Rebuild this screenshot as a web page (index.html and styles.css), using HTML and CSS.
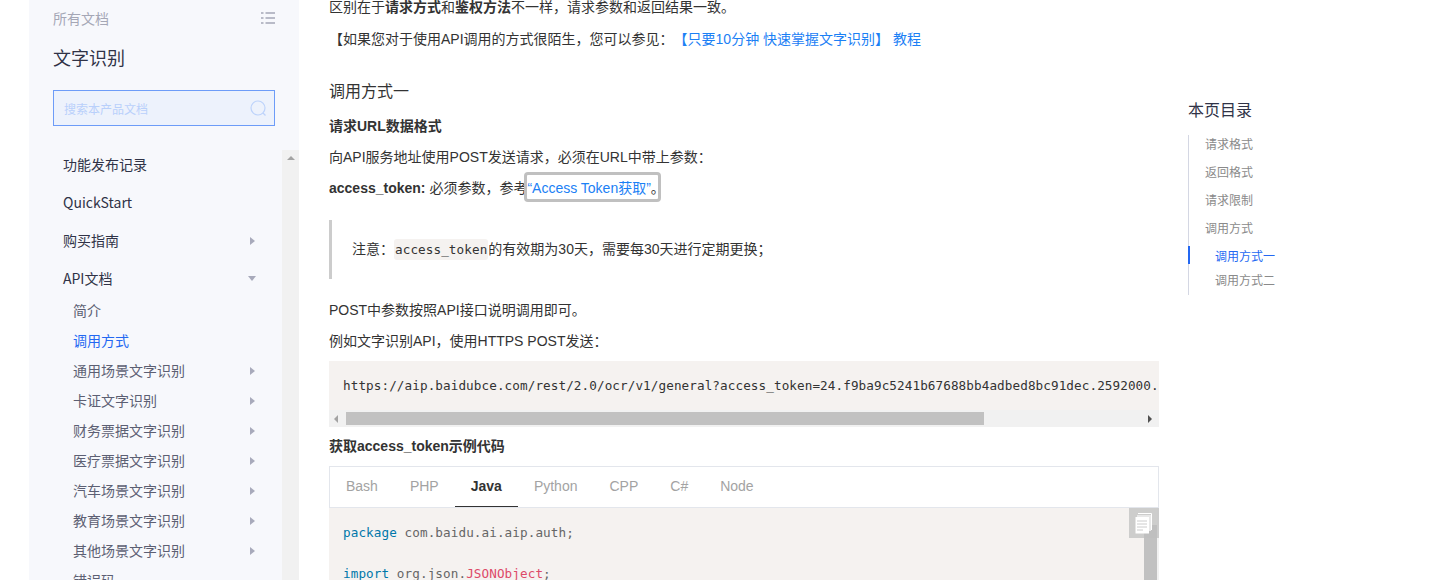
FILE: index.html
```html
<!DOCTYPE html>
<html lang="zh-CN">
<head>
<meta charset="utf-8">
<title>调用方式 - 文字识别</title>
<link rel="stylesheet" href="styles.css">
</head>
<body>
<div class="page">
  <aside class="sidebar">
    <div class="side-head">
      <div class="all-docs">
        <span>所有文档</span>
        <svg class="list-icon" width="14" height="12" viewBox="0 0 14 12"><path d="M0 1h2.500M4.500 1H14M0 6h2.500M4.500 6H14M0 11h2.500M4.500 11H14" stroke="#a5a7b6" stroke-width="1.500" fill="none"/></svg>
      </div>
      <h1 class="product">文字识别</h1>
      <div class="search">
        <span>搜索本产品文档</span>
        <svg width="17" height="17" viewBox="0 0 17 17"><circle cx="8" cy="8" r="7" fill="none" stroke="#bdd3fb" stroke-width="1.200"/><path d="M13 13l2.500 2.500" stroke="#bdd3fb" stroke-width="1.200"/></svg>
      </div>
    </div>
    <div class="menu-wrap">
      <ul class="menu">
        <li class="m1">功能发布记录</li>
        <li class="m1">QuickStart</li>
        <li class="m1">购买指南<i class="tri-r"></i></li>
        <li class="m1 open">API文档<i class="tri-d"></i></li>
        <li class="m2">简介</li>
        <li class="m2 on">调用方式</li>
        <li class="m2">通用场景文字识别<i class="tri-r"></i></li>
        <li class="m2">卡证文字识别<i class="tri-r"></i></li>
        <li class="m2">财务票据文字识别<i class="tri-r"></i></li>
        <li class="m2">医疗票据文字识别<i class="tri-r"></i></li>
        <li class="m2">汽车场景文字识别<i class="tri-r"></i></li>
        <li class="m2">教育场景文字识别<i class="tri-r"></i></li>
        <li class="m2">其他场景文字识别<i class="tri-r"></i></li>
        <li class="m2">错误码</li>
      </ul>
      <div class="side-scroll"><i class="tri-u"></i></div>
    </div>
  </aside>

  <main class="content">
    <p class="intro">区别在于<b>请求方式</b>和<b>鉴权方法</b>不一样，请求参数和返回结果一致。</p>
    <p class="guide">【如果您对于使用API调用的方式很陌生，您可以参见：<a>【只要10分钟 快速掌握文字识别】 教程</a></p>
    <h3>调用方式一</h3>
    <p><b>请求URL数据格式</b></p>
    <p>向API服务地址使用POST发送请求，必须在URL中带上参数：</p>
    <p><b>access_token:</b> 必须参数，参考<span class="focus"><a>“Access Token获取”</a><span class="stop">。</span></span></p>
    <blockquote>注意：<code>access_token</code>的有效期为30天，需要每30天进行定期更换；</blockquote>
    <p>POST中参数按照API接口说明调用即可。</p>
    <p>例如文字识别API，使用HTTPS POST发送：</p>
    <div class="url-block">
      <pre class="url-code">https://aip.baidubce.com/rest/2.0/ocr/v1/general?access_token=24.f9ba9c5241b67688bb4adbed8bc91dec.2592000.</pre>
      <div class="hbar"><i class="tri-l"></i><div class="hthumb"></div><i class="tri-rd"></i></div>
    </div>
    <p class="code-title"><b>获取access_token示例代码</b></p>
    <div class="tabs">
      <span class="tab">Bash</span><span class="tab">PHP</span><span class="tab active">Java</span><span class="tab">Python</span><span class="tab">CPP</span><span class="tab">C#</span><span class="tab">Node</span>
    </div>
    <div class="code-block">
      <pre class="java"><span class="kw">package</span> com.baidu.ai.aip.auth;

<span class="kw">import</span> org.json.<span class="cls">JSONObject</span>;</pre>
      <div class="vbar"><div class="vthumb"></div></div>
      <div class="copy">
        <svg width="20" height="21" viewBox="0 0 20 21"><path d="M4 0.500H17.500V17" fill="none" stroke="#fff" stroke-width="1"/><path d="M3 2H17V18H15V4H3Z" fill="#e8e8e8"/><path d="M1.500 4H15V20.500H1.500Z" fill="#fff"/><path d="M3 8H13M3 11H13M3 14H13M3 17H9" stroke="#ccc" stroke-width="1"/></svg>
      </div>
    </div>
  </main>

  <nav class="toc">
    <h2>本页目录</h2>
    <ul class="toc-list">
      <li>请求格式</li>
      <li>返回格式</li>
      <li>请求限制</li>
      <li>调用方式</li>
      <li class="sub on">调用方式一</li>
      <li class="sub">调用方式二</li>
    </ul>
  </nav>
</div>
</body>
</html>
```
FILE: styles.css
```css
* { box-sizing: border-box; }
html, body { margin: 0; padding: 0; background: #fff; }
body { font-family: "Liberation Sans", "Noto Sans CJK SC", sans-serif; overflow: hidden; }
ul { list-style: none; margin: 0; padding: 0; }
i { display: block; flex: none; }

.page { display: flex; width: 1435px; height: 580px; overflow: hidden; padding-left: 29px; }

/* sidebar */
.sidebar { width: 270px; flex: none; height: 580px; background: #f7f8fc; display: flex; flex-direction: column; font-family: "Noto Sans CJK SC", sans-serif; }
.side-head { padding: 0 24px; height: 150px; flex: none; }
.all-docs { display: flex; justify-content: space-between; align-items: center; height: 36px; font-size: 14px; color: #a5a7b6; }
.all-docs span { margin-top: -1px; }
.product { margin: 7px 0 0; font-size: 18px; font-weight: 400; line-height: 28px; color: #303347; }
.search { margin-top: 19px; height: 36px; width: 222px; border: 1px solid #6d9cf8; background: #edf2fc; display: flex; align-items: center; justify-content: space-between; padding: 0 7px 0 10px; font-size: 12px; color: #b9d0fb; }
.menu-wrap { flex: 1; display: flex; min-height: 0; overflow: hidden; }
.menu { width: 253px; flex: none; padding: 0 27px 0 34px; margin-top: -5px; }
.m1 { height: 38px; display: flex; align-items: center; justify-content: space-between; font-size: 14px; color: #303347; }
.m1.open { margin-bottom: -2px; }
.m2 { height: 30px; display: flex; align-items: center; justify-content: space-between; padding-left: 10px; font-size: 14px; color: #5c5f73; }
.m2.on { color: #2468f2; }
.side-scroll { width: 17px; flex: none; background: #f1f1f1; padding: 6px 0 0 5px; }
.tri-r { width: 0; height: 0; margin-top: 1px; border-left: 5px solid #a8aabb; border-top: 4px solid transparent; border-bottom: 4px solid transparent; }
.tri-d { width: 0; height: 0; border-top: 5px solid #a8aabb; border-left: 4px solid transparent; border-right: 4px solid transparent; margin-right: -1px; }
.tri-u { width: 0; height: 0; border-bottom: 4px solid #a3a3a3; border-left: 4px solid transparent; border-right: 4px solid transparent; }

/* main */
.content { width: 830px; flex: none; margin-left: 30px; font-size: 14px; color: #333; height: 580px; overflow: hidden; text-spacing-trim: space-all; }
.content p { margin: 0 0 10px; line-height: 21px; font-size: 14px; }
.content .intro { margin-top: -3px; margin-bottom: 11px; }
.content a { color: #1b80f5; }
.content b { font-weight: 700; }
.content h3 { margin: 31px 0 13px; font-size: 16px; line-height: 22px; font-weight: 400; color: #333; }
.focus { outline: 3px solid #c0c0c0; border-radius: 1px; padding: 5px 0 3px; }
.stop { letter-spacing: -7px; }
blockquote { margin: 21px 0 21px; height: 59px; border-left: 3px solid #ccc; padding-left: 20px; display: flex; align-items: center; white-space: pre; font-size: 14px; line-height: 21px; }
code { font-family: "DejaVu Sans Mono", monospace; font-size: 12.650px; letter-spacing: .085px; background: #f5f2f0; border-radius: 3px; padding: 1px; line-height: 19px; }
.url-block { background: #f5f2f0; height: 66px; margin: -1px 0 9px; overflow: hidden; display: flex; flex-direction: column; }
pre { margin: 0; font-family: "DejaVu Sans Mono", monospace; font-size: 12.650px; letter-spacing: .085px; color: #333; }
.url-code { height: 49px; padding: 15px 0 0 14px; line-height: 20px; white-space: pre; overflow: hidden; }
.hbar { height: 17px; background: #f1f1f1; display: flex; align-items: center; padding: 0 7px 0 5px; }
.tri-l { width: 0; height: 0; border-right: 4px solid #a3a3a3; border-top: 4px solid transparent; border-bottom: 4px solid transparent; }
.tri-rd { width: 0; height: 0; border-left: 4px solid #505050; border-top: 4px solid transparent; border-bottom: 4px solid transparent; margin-left: auto; }
.hthumb { width: 638px; height: 13px; background: #c1c1c1; margin-left: 8px; }
.content .code-title { margin-bottom: 9px; }
.tabs { height: 42px; border: 1px solid #e3e6ec; display: flex; }
.tab { padding: 0 16px; font-size: 14px; line-height: 39px; color: #a3a3a3; }
.tab.active { color: #333; font-weight: 700; border-bottom: 1px solid #333; height: 40px; }
.code-block { position: relative; display: flex; background: #f5f2f0; height: 72px; overflow: hidden; }
.java { flex: 1; min-width: 0; padding: 15px 0 0 14px; line-height: 20.500px; color: #666; }
.kw { color: #07a; }
.cls { color: #dd4a68; }
.vbar { width: 15px; flex: none; border-right: 2px solid #f1f1f1; padding-top: 17px; }
.vthumb { width: 13px; height: 55px; background: #c1c1c1; }
.copy { position: absolute; top: 0; right: 0; width: 30px; height: 30px; background: rgba(190,190,190,.72); display: flex; align-items: center; justify-content: center; }

/* toc */
.toc { margin-left: 29px; width: 200px; flex: none; font-family: "Noto Sans CJK SC", sans-serif; }
.toc h2 { margin: 97px 0 13px; font-size: 16px; line-height: 25px; font-weight: 400; color: #303347; }
.toc-list { display: flow-root; border-left: 1px solid #d4d7e3; width: 120px; height: 160px; padding-left: 16px; font-size: 12px; color: #8a8a8a; }
.toc-list li { height: 28px; display: flex; align-items: center; }
.toc-list li:first-child { margin-top: -6px; }
.toc-list .sub { height: 24px; padding-left: 10px; }
.toc-list .sub.on { height: 18px; margin: 5px 0 3px -17px; padding-left: 25px; border-left: 2px solid #2468f2; color: #2468f2; }
```
